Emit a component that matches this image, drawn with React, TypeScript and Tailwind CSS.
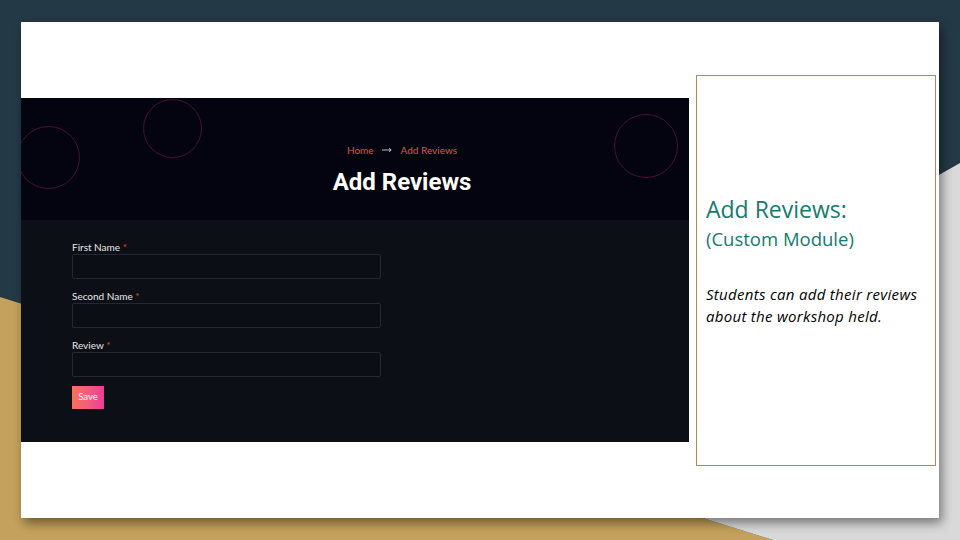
import React from "react";

function Field({ label, last }: { label: string; last?: boolean }) {
  return (
    <div className={last ? "mb-[9px] flex flex-col" : "mb-[10px] flex flex-col"}>
      <div className="mb-[1px] h-[13px] text-[10px] leading-[14px] text-[#e8e8e8]" style={{ fontFamily: "Lato, sans-serif" }}>
        {label} <span className="text-[#e0462c]">*</span>
      </div>
      <div className="h-[25px] w-[309px] rounded-[2px] border border-[#252830] bg-[#0b0e14]" />
    </div>
  );
}

export default function App() {
  return (
    <div className="relative h-[540px] w-[960px] overflow-hidden bg-[#243946]">
      <svg className="absolute inset-0 z-0" width="960" height="540" viewBox="0 0 960 540">
        <polygon points="0,297 773,540 0,540" fill="#c4a15c" />
        <polygon points="960,163 467,444 773,540 960,540" fill="#d9d9d9" />
      </svg>
      <div className="relative z-10 pl-[21px] pt-[22px]">
        <div className="flex h-[496px] w-[918px] items-start bg-white shadow-[3px_5px_10px_rgba(0,0,0,0.45)]">
          {/* Screenshot */}
          <div className="mt-[76px] flex w-[668px] flex-col">
            <div className="relative h-[122px] overflow-hidden bg-[#03040f]">
              <div className="absolute left-[-4px] top-[28px] h-[63px] w-[63px] rounded-full border border-[#4b0f30]" />
              <div className="absolute left-[122px] top-[1px] h-[59px] w-[59px] rounded-full border border-[#4b0f30]" />
              <div className="absolute left-[593px] top-[16px] h-[64px] w-[64px] rounded-full border border-[#4b0f30]" />
              <div className="relative flex flex-col items-center pl-[94px] pt-[46px]">
                <div className="flex items-center text-[10px] leading-[12px] text-[#e0553a]" style={{ fontFamily: "Lato, sans-serif" }}>
                  <span>Home</span>
                  <svg className="ml-[8px] mr-[9px]" width="10" height="6" viewBox="0 0 10 6">
                    <path d="M0 3H9M7 1.2L9.2 3L7 4.8" stroke="#cfcfcf" strokeWidth="0.9" fill="none" />
                  </svg>
                  <span>Add Reviews</span>
                </div>
                <div className="mt-[12px] text-[24px] font-bold leading-[28px] text-white" style={{ fontFamily: "Roboto, sans-serif" }}>
                  Add Reviews
                </div>
              </div>
            </div>
            <div className="flex h-[222px] flex-col bg-[#0c0f16] pl-[51px] pt-[20px]">
              <Field label="First Name" />
              <Field label="Second Name" />
              <Field label="Review" last />
              <div
                className="flex h-[23px] w-[32px] items-center justify-center bg-gradient-to-r from-[#f7725a] to-[#ef3a98] text-[9.5px] text-white"
                style={{ fontFamily: "Lato, sans-serif" }}
              >
                Save
              </div>
            </div>
          </div>
          {/* Text box */}
          <div
            className="ml-[7px] mt-[53px] flex h-[391px] w-[240px] flex-col border border-[#b5865a] pl-[9px] pt-[119px]"
            style={{ fontFamily: "'Open Sans', sans-serif" }}
          >
            <div className="text-[23px] leading-[28px] text-[#137b6f]">Add Reviews:</div>
            <div className="mt-[4px] text-[18.5px] leading-[24px] text-[#137b6f]">(Custom Module)</div>
            <div className="mt-[32px] whitespace-nowrap text-[15px] italic leading-[22px] tracking-[0.3px] text-black">
              Students can add their reviews
              <br />
              about the workshop held.
            </div>
          </div>
        </div>
      </div>
    </div>
  );
}
